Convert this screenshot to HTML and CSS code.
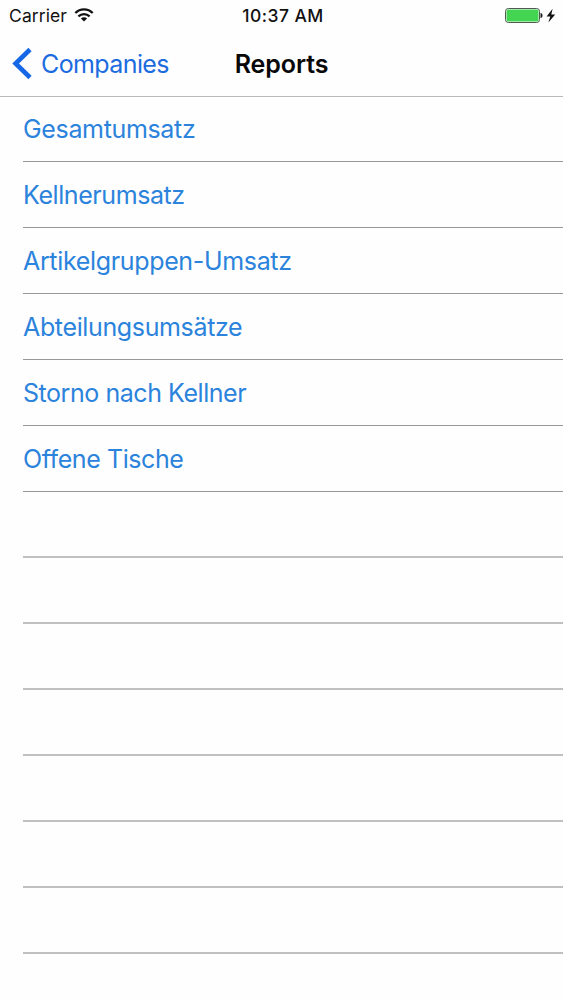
FILE: index.html
```html
<!DOCTYPE html>
<html lang="de">
<head>
<meta charset="utf-8">
<title>Reports</title>
<link rel="stylesheet" href="styles.css">
</head>
<body>
<div class="screen">
  <header class="header">
    <div class="status">
      <div class="status-left">
        <span class="carrier">Carrier</span>
        <svg class="wifi" width="20" height="14" viewBox="0 0 20 14" fill="none" stroke="#111" stroke-width="2.2">
          <path d="M1.3 5.1C6.1.2 13.9.2 18.7 5.1"/>
          <path d="M4.4 8.4C7.6 5.3 12.4 5.3 15.6 8.4"/>
          <path d="M10 13.5L6.9 10.4C8.7 8.8 11.3 8.8 13.1 10.4Z" fill="#111" stroke="none"/>
        </svg>
      </div>
      <span class="time">10:37 AM</span>
      <div class="status-right">
        <svg class="battery" width="53" height="18" viewBox="0 0 53 18">
          <rect x="0.500" y="1.500" width="34" height="14" rx="2.800" fill="#fff" stroke="#4d5a50"/>
          <rect x="1.500" y="2.500" width="32" height="12" rx="1.500" fill="#43d551"/>
          <path d="M35.500 6c1.500.2 2 1.200 2 2.500s-.5 2.300-2 2.500z" fill="#222"/>
          <path d="M47.600 1.800L41.600 9.400H45.300L43.400 15.600L50.200 7.400H46.300Z" fill="#111"/>
        </svg>
      </div>
    </div>
    <nav class="nav">
      <a class="back">
        <svg class="chevron" width="22" height="34" viewBox="0 0 22 34" fill="none" stroke="#1667e5" stroke-width="4.600"><path d="M19 2.500L4.600 16.500L19 30.500"/></svg>
        <span class="back-label">Companies</span>
      </a>
      <h1 class="title">Reports</h1>
    </nav>
  </header>
  <ul class="list">
    <li class="row"><span class="gesamt">Gesamtumsatz</span></li>
    <li class="row"><span class="kellner">Kellnerumsatz</span></li>
    <li class="row"><span class="artikel">Artikelgruppen-Umsatz</span></li>
    <li class="row"><span class="abteilung">Abteilungsumsätze</span></li>
    <li class="row"><span class="storno">Storno nach Kellner</span></li>
    <li class="row"><span class="tische">Offene Tische</span></li>
    <li class="row empty"></li>
    <li class="row empty"></li>
    <li class="row empty"></li>
    <li class="row empty"></li>
    <li class="row empty"></li>
    <li class="row empty"></li>
    <li class="row empty"></li>
  </ul>
</div>
</body>
</html>
```
FILE: styles.css
```css
* { box-sizing: border-box; }
body { margin: 0; background: #fefefe; font-family: Inter, "Liberation Sans", sans-serif; }
.screen { width: 563px; height: 1000px; overflow: hidden; }
.header { height: 97px; border-bottom: 1px solid #b9b9bb; }
.status { display: grid; grid-template-columns: 1fr auto 1fr; align-items: center; height: 31px; padding: 0 5px 0 9px; color: #111; font-size: 17.5px; line-height: 31px; }
.status-left { display: flex; align-items: center; gap: 7px; }
.carrier { letter-spacing: 0.1px; }
.wifi { margin-top: -1px; }
.time { font-weight: 500; font-size: 17.5px; letter-spacing: 0.45px; margin-left: -1px; }
.status-right { display: flex; justify-content: flex-end; }
.nav { display: grid; grid-template-columns: 1fr auto 1fr; align-items: center; height: 65px; padding: 0 0 0 11px; }
.back { display: flex; align-items: center; gap: 8px; color: #1c6ce0; font-size: 25px; letter-spacing: -0.6px; }
.title { margin: 0 0 0 -11px; font-size: 25px; font-weight: 600; letter-spacing: -0.1px; color: #080808; }
.list { list-style: none; margin: 0; padding: 0 0 0 23px; }
.row { display: flex; align-items: center; height: 66px; padding-top: 1px; border-bottom: 1px solid #98989a; color: #2b83dc; font-size: 25px; }
.row:first-child { height: 65px; padding-top: 0; }
.row span { line-height: 30px; }
.empty { border-bottom: 2px solid #c0c0c2; }
.gesamt { letter-spacing: -0.34px; }
.kellner { letter-spacing: -0.42px; }
.artikel { letter-spacing: -0.34px; }
.abteilung { letter-spacing: -0.36px; }
.storno { letter-spacing: -0.45px; }
.tische { letter-spacing: -0.42px; }
```
